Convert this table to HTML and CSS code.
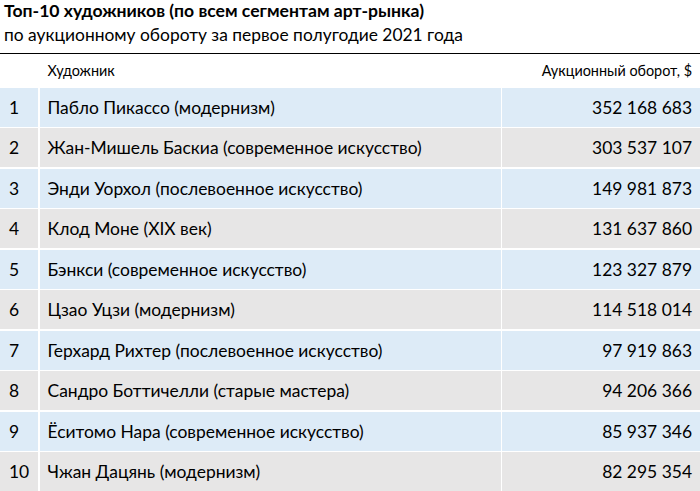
FILE: index.html
```html
<!DOCTYPE html>
<html lang="ru">
<head>
<meta charset="utf-8">
<title>Топ-10 художников</title>
<link rel="stylesheet" href="styles.css">
</head>
<body>
<div class="page">
  <div class="title">Топ-10 художников (по всем сегментам арт-рынка)</div>
  <div class="subtitle">по аукционному обороту за первое полугодие 2021 года</div>
  <div class="table">
    <div class="row head">
      <div class="cell num"></div>
      <div class="cell name">Художник</div>
      <div class="cell val">Аукционный оборот, $</div>
    </div>
    <div class="row blue"><div class="cell num">1</div><div class="cell name">Пабло Пикассо (модернизм)</div><div class="cell val">352 168 683</div></div>
    <div class="row grey"><div class="cell num">2</div><div class="cell name">Жан-Мишель Баскиа (современное искусство)</div><div class="cell val">303 537 107</div></div>
    <div class="row blue"><div class="cell num">3</div><div class="cell name">Энди Уорхол (послевоенное искусство)</div><div class="cell val">149 981 873</div></div>
    <div class="row grey"><div class="cell num">4</div><div class="cell name">Клод Моне (XIX век)</div><div class="cell val">131 637 860</div></div>
    <div class="row blue"><div class="cell num">5</div><div class="cell name">Бэнкси (современное искусство)</div><div class="cell val">123 327 879</div></div>
    <div class="row grey"><div class="cell num">6</div><div class="cell name">Цзао Уцзи (модернизм)</div><div class="cell val">114 518 014</div></div>
    <div class="row blue"><div class="cell num">7</div><div class="cell name">Герхард Рихтер (послевоенное искусство)</div><div class="cell val">97 919 863</div></div>
    <div class="row grey"><div class="cell num">8</div><div class="cell name">Сандро Боттичелли (старые мастера)</div><div class="cell val">94 206 366</div></div>
    <div class="row blue"><div class="cell num">9</div><div class="cell name">Ёситомо Нара (современное искусство)</div><div class="cell val">85 937 346</div></div>
    <div class="row grey"><div class="cell num">10</div><div class="cell name">Чжан Дацянь (модернизм)</div><div class="cell val">82 295 354</div></div>
  </div>
</div>
</body>
</html>
```

FILE: styles.css
```css
html, body {
  margin: 0;
  padding: 0;
  background: #ffffff;
}
body {
  font-family: Lato, "Noto Sans", "Liberation Sans", sans-serif;
  color: #000000;
  width: 700px;
  height: 491px;
  overflow: hidden;
}
.page {
  display: flex;
  flex-direction: column;
}
.title {
  font-weight: bold;
  font-size: 17.6px;
  line-height: 22px;
  padding: 0 0 0 4px;
}
.subtitle {
  font-size: 17.4px;
  line-height: 26px;
  padding: 0 0 5px 4px;
  border-bottom: 1px solid #000;
}
.table {
  display: flex;
  flex-direction: column;
  gap: 1.5px;
  padding-top: 0;
}
.row {
  display: grid;
  grid-template-columns: 38px 1fr 198px;
  column-gap: 1.5px;
  height: 39px;
}
.row.head {
  height: 32px;
}
.cell {
  display: flex;
  align-items: center;
  font-size: 17.45px;
  white-space: nowrap;
}
.num {
  padding-left: 9px;
}
.name {
  padding-left: 8px;
}
.val {
  justify-content: flex-end;
  padding-right: 8px;
}
.head .cell {
  font-size: 14.4px;
}
.blue .cell {
  background: #ddebf7;
}
.grey .cell {
  background: #e7e6e6;
}
```
